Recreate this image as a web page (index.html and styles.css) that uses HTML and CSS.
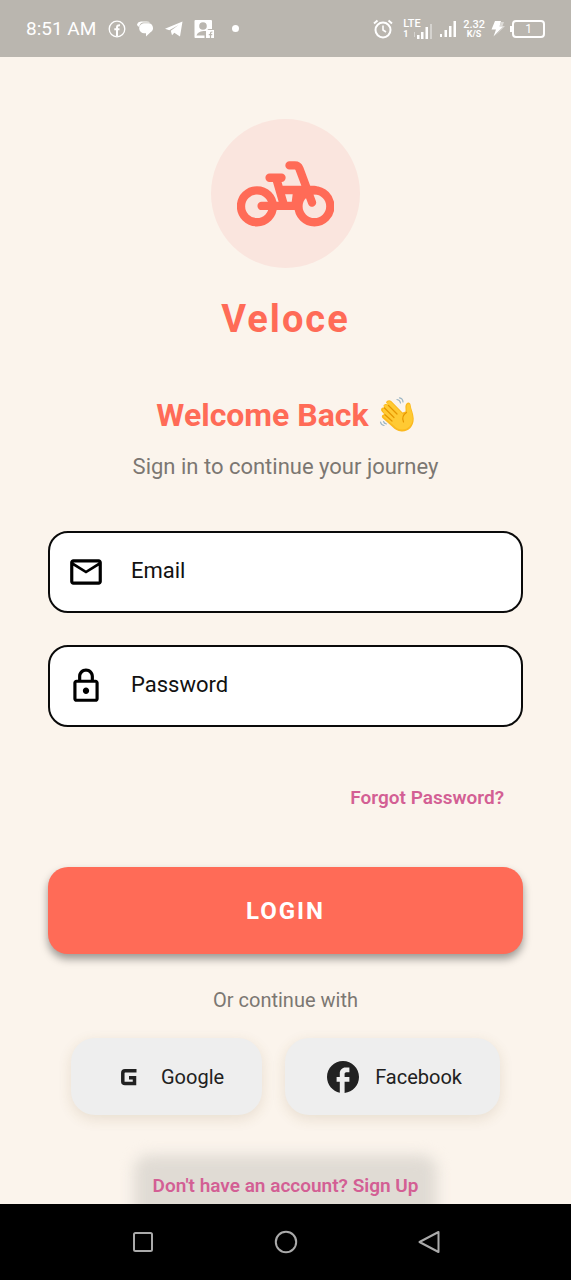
FILE: index.html
```html
<!DOCTYPE html>
<html lang="en">
<head>
<meta charset="utf-8">
<meta name="viewport" content="width=device-width, initial-scale=1">
<title>Veloce – Sign in</title>
<link rel="stylesheet" href="styles.css">
</head>
<body>
<div class="app">
  <header class="status">
    <div class="status-left">
      <span class="clock">8:51 AM</span>
      <svg width="18" height="18" viewBox="0 0 18 18" fill="none" stroke="currentColor"><circle cx="9" cy="9" r="7.8" stroke-width="1.3"/><path d="M9 16V7.2Q9 5 12 5.2M6.3 9.3h5.2" stroke-width="2"/></svg>
      <svg width="18" height="18" viewBox="0 0 18 18" fill="currentColor"><path d="M1 4.2Q2 1.500 5 1.500h5.500Q13 1.500 14 2.500H7Q3.500 3 3.400 7 1 6.500 1 4.200Z"/><path d="M7.800 3.200h4.700a4.800 4.800 0 0 1 2 9l-4.500 4.300v-3.300H8.500a5 5 0 0 1-.7-10Z"/></svg>
      <svg width="20" height="18" viewBox="0 0 20 18" fill="currentColor"><path d="M1 8.800 18.500 1.500 16 16.500 10.300 12.700 8 15.200 6.800 10.700 14.500 5 5.300 10.300Z"/></svg>
      <svg width="20" height="20" viewBox="0 0 20 20"><path fill="currentColor" fill-rule="evenodd" d="M1.500 1h15.500a1 1 0 0 1 1 1v8h-3.500l-2.500 2-2.500 0q-6 .5-7 4.500h8V19H1a1 1 0 0 1-.5-1V2a1 1 0 0 1 1-1ZM9 3.200a3.800 3.800 0 1 0 0 7.600 3.800 3.800 0 0 0 0-7.600Z"/><path fill="currentColor" d="M12 11h8v8h-8z"/><path d="M16.500 19v-4.500q0-1.600 2-1.500M14.800 15.600h3.500" fill="none" stroke="#bab6af" stroke-width="1.2"/></svg>
      <span class="dot"></span>
    </div>
    <div class="status-right">
      <svg width="20" height="20" viewBox="0 0 20 20" fill="none" stroke="currentColor" stroke-width="2"><circle cx="10" cy="11" r="7.500"/><path d="M10 6.500V11l3 2" stroke-width="1.600"/><path d="M1 4.500 4.500 1.500M19 4.500 15.500 1.500"/></svg>
      <div class="lte">
        <span class="lte-name">LTE</span>
        <span class="lte-row"><span>1</span><svg width="19" height="15" viewBox="0 0 19 15" fill="currentColor"><path d="M3 11h2.500v4H3zM7 8h2.500v7H7zM11.500 3H14v12h-2.500z"/><path opacity=".4" d="M16 0h2v15h-2zM0 8h1v5H0z"/></svg></span>
      </div>
      <svg width="18" height="18" viewBox="0 0 18 18" fill="currentColor"><path d="M1 14h2v3H1zM5.500 10H8v7H5.500zM10 6h2.500v11H10zM14.500 1H17v16h-2.500z"/></svg>
      <div class="speed"><span class="speed-num">2.32</span><span class="speed-unit">K/S</span></div>
      <svg width="14" height="18" viewBox="0 0 14 18"><path fill="currentColor" d="M4 1h6L8.500 6.500H12L2.500 16.500 5 9.500H.5Z"/><path fill="currentColor" opacity=".5" d="M10 2h3l-1.500 4H14L5 15l7-8.500H8.500Z"/></svg>
      <div class="battery">1</div>
    </div>
  </header>

  <main class="screen">
    <div class="logo">
      <svg class="bike" viewBox="110 151 292 198" fill="none" stroke="currentColor" stroke-width="25" stroke-linecap="round" stroke-linejoin="round" aria-hidden="true">
        <circle cx="170" cy="287" r="48"/><circle cx="343" cy="287" r="48"/>
        <path d="M184 286H292M208 201H244M228 203 250 279M242 238H343M268 164H284Q294 164 298 174L336 276M290 252 286 284"/>
      </svg>
    </div>
    <h1 class="brand">Veloce</h1>
    <h2 class="welcome">Welcome Back
      <svg class="wave" viewBox="0 0 36 36" role="img" aria-label="waving hand">
        <path fill="#fbb91f" d="M4.500 8.500C5.500 6.500 8 6.500 9.500 8.300L7 5.500C8 3 10.500 2.300 12.500 4.300L23.500 15.500 26.500 14.500C27 12 25.500 9 27.500 6.500 29.500 4.500 31.500 6 31.700 8.500 32 12 34.500 16 34.700 21.500 35 29.500 29 35 22.500 34.500 18.500 34.300 16 32.500 13.500 30L4 21.500C1.800 19.500 3.200 17 5.500 17.500L2.800 14.500C1.200 12.500 2.500 10 5 10.500Z"/>
        <path fill="#ffca33" d="M5 8.500c1.500-1.500 3-.5 4.500 1L7.800 6.500c.7-2.500 3-2.800 4.700-1l11.500 12 4-2c0-3-1-6 .3-8 1.200-1.300 2.700-.3 2.900 1.500.5 4 2.500 8 2.500 12.500 0 6-4.500 11-10.500 11-3.500 0-6-1.500-8.500-4L5 20c-1-1.500 0-2.500 2-1L4 14c-.5-2 .5-3 2.500-1.500Z"/>
        <path fill="none" stroke="#e59600" stroke-width="1.200" stroke-linecap="round" d="M9.500 8.500 18 17M5.500 11 15 20.500M6 17.700 13 24M27.500 15.500Q22 19 24.500 25"/>
        <path fill="none" stroke="#9bb5c4" stroke-width="1.200" stroke-linecap="round" d="M18 2.500Q21 3 21.500 6M20.500.800Q23.800 1.300 24 5M1.500 25Q2 28 5 28.500M4.500 24.500Q5 26.500 7.500 27"/>
      </svg>
    </h2>
    <p class="lead">Sign in to continue your journey</p>

    <form class="form">
      <label class="field">
        <svg class="field-icon" viewBox="0 0 24 24" fill="currentColor" aria-hidden="true"><path d="M22 6c0-1.100-.900-2-2-2H4c-1.100 0-2 .900-2 2v12c0 1.100.900 2 2 2h16c1.100 0 2-.900 2-2V6zm-2 0-8 5-8-5h16zm0 12H4V8l8 5 8-5v10z"/></svg>
        <input class="input" type="email" placeholder="Email" aria-label="Email">
      </label>
      <label class="field">
        <svg class="field-icon" viewBox="0 0 24 24" fill="currentColor" aria-hidden="true"><path d="M18 8h-1V6c0-2.760-2.240-5-5-5S7 3.240 7 6v2H6c-1.100 0-2 .900-2 2v10c0 1.100.900 2 2 2h12c1.100 0 2-.900 2-2V10c0-1.100-.900-2-2-2zM9 6c0-1.660 1.340-3 3-3s3 1.340 3 3v2H9V6zm9 14H6V10h12v10zm-6-3c1.100 0 2-.900 2-2s-.900-2-2-2-2 .900-2 2 .900 2 2 2z"/></svg>
        <input class="input" type="password" placeholder="Password" aria-label="Password">
      </label>
      <button class="text-button forgot" type="button">Forgot Password?</button>
      <button class="login" type="submit">LOGIN</button>
    </form>

    <p class="divider">Or continue with</p>
    <div class="social">
      <button class="social-button" type="button">
        <svg class="social-icon" viewBox="0 0 32 32" fill="none" stroke="currentColor" stroke-width="3.500" aria-hidden="true"><path d="M23.500 9.800H12Q9.800 9.800 9.800 12V20.500Q9.800 22.500 12 22.500H21.500V16.800H16"/></svg>
        <span>Google</span>
      </button>
      <button class="social-button" type="button">
        <svg class="social-icon" viewBox="2 2 20 20" fill="currentColor" aria-hidden="true"><path d="M22 12c0-5.520-4.480-10-10-10S2 6.480 2 12c0 4.840 3.440 8.870 8 9.800V15H8v-3h2V9.500C10 7.570 11.570 6 13.500 6H16v3h-2c-.550 0-1 .450-1 1v2h3v3h-3v6.950c5.050-.500 9-4.760 9-9.950z"/></svg>
        <span>Facebook</span>
      </button>
    </div>
    <button class="text-button signup" type="button">Don't have an account? Sign Up</button>
  </main>

  <nav class="system-nav" aria-label="System">
    <button class="nav-button" type="button" aria-label="Recents"><svg width="24" height="24" viewBox="0 0 24 24"><rect x="3" y="3" width="18" height="18" rx="1.500"/></svg></button>
    <button class="nav-button" type="button" aria-label="Home"><svg width="24" height="24" viewBox="0 0 24 24"><circle cx="12" cy="12" r="10.200"/></svg></button>
    <button class="nav-button" type="button" aria-label="Back"><svg width="24" height="24" viewBox="0 0 24 24"><path d="M21.500 2V22L2.500 12Z"/></svg></button>
  </nav>
</div>
</body>
</html>
```
FILE: styles.css
```css
* { box-sizing: border-box; }

body {
  margin: 0;
  background: #fbf4ec;
  font-family: Roboto, "Noto Sans", sans-serif;
}

h1, h2, p { margin: 0; }

svg { display: block; flex: none; }

button {
  font: inherit;
  border: 0;
  background: none;
  cursor: pointer;
}

.app {
  height: 100vh;
  display: flex;
  flex-direction: column;
}

/* System status bar */
.status {
  flex: none;
  height: 57px;
  padding: 0 26px;
  display: flex;
  align-items: center;
  justify-content: space-between;
  background: #bab6af;
  color: #fff;
}

.status-left, .status-right { display: flex; align-items: center; }
.status-left { gap: 10px; }
.status-right { gap: 6px; }
.clock { font-size: 19px; margin-right: 2px; white-space: nowrap; }
.dot { width: 7px; height: 7px; margin-left: 8px; border-radius: 50%; background: #fff; }

.lte { width: 30px; margin-left: 4px; }
.lte-name { display: block; height: 7px; font-size: 11px; line-height: 9px; font-weight: 500; }
.lte-row { display: flex; align-items: flex-end; justify-content: space-between; height: 13px; font-size: 9px; line-height: 9px; font-weight: 700; }

.speed { display: flex; flex-direction: column; align-items: center; font-weight: 500; }
.speed-num { font-size: 11px; line-height: 10px; }
.speed-unit { font-size: 9px; line-height: 8px; font-weight: 700; }

.battery {
  position: relative;
  width: 33px;
  height: 18px;
  margin-left: 1px;
  border: 2px solid #fff;
  border-radius: 4px;
  font-size: 12px;
  line-height: 14px;
  text-align: center;
}
.battery::before {
  content: "";
  position: absolute;
  left: -4px;
  top: 4px;
  width: 2px;
  height: 6px;
  background: #fff;
}

/* Sign-in screen */
.screen {
  flex: 1;
  min-height: 0;
  overflow-y: auto;
  scrollbar-width: none;
  padding: 62px 48px 0;
  display: flex;
  flex-direction: column;
  align-items: center;
}
.screen > * { flex: none; }

.logo {
  width: 149px;
  height: 149px;
  border-radius: 50%;
  background: #fae5de;
  color: #ff6b57;
  display: grid;
  place-items: center;
}
.bike { width: 97px; height: 66px; }

.brand {
  margin-top: 29px;
  font-size: 38px;
  line-height: 44px;
  font-weight: 700;
  letter-spacing: 2px;
  color: #ff6b57;
}

.welcome {
  margin-top: 54px;
  display: flex;
  align-items: center;
  gap: 10px;
  font-size: 32px;
  line-height: 40px;
  font-weight: 700;
  color: #ff6b57;
}
.wave { width: 36px; height: 36px; }

.lead {
  margin-top: 20px;
  font-size: 22px;
  line-height: 24px;
  color: #7b7772;
}

.form {
  width: 100%;
  margin-top: 52px;
  display: flex;
  flex-direction: column;
}

.field {
  height: 82px;
  margin-bottom: 32px;
  padding: 0 17px;
  display: flex;
  align-items: center;
  gap: 26px;
  background: #fff;
  border: 2px solid #0a0a0a;
  border-radius: 20px;
  color: #000;
}
.field-icon { width: 38px; height: 38px; }

.input {
  flex: 1;
  min-width: 0;
  padding: 0 0 4px;
  border: 0;
  outline: 0;
  background: none;
  font: inherit;
  font-size: 22px;
  color: #111;
}
.input::placeholder { color: #111; opacity: 1; }

.text-button {
  height: 40px;
  padding: 0 19px;
  font-size: 19px;
  font-weight: 600;
  color: #d35f94;
}
.forgot { align-self: flex-end; margin-top: 18px; }

.login {
  height: 87px;
  margin-top: 50px;
  border-radius: 20px;
  background: #ff6b57;
  box-shadow: 0 5px 8px rgba(0, 0, 0, 0.38);
  color: #fff;
  font-size: 24px;
  font-weight: 700;
  letter-spacing: 2px;
}

.divider {
  margin-top: 34px;
  font-size: 20px;
  line-height: 24px;
  color: #7b7772;
}

.social { display: flex; gap: 23px; margin-top: 26px; }
.social-button {
  height: 77px;
  padding: 0 38px 0 42px;
  display: flex;
  align-items: center;
  gap: 16px;
  border-radius: 24px;
  background: #eee;
  box-shadow: 0 4px 14px rgba(120, 90, 40, 0.14);
  color: #212121;
  font-size: 20px;
}
.social-icon { width: 32px; height: 32px; }

.signup {
  position: relative;
  z-index: 0;
  height: 60px;
  margin-top: 40px;
}
.signup::before {
  content: "";
  position: absolute;
  z-index: -1;
  inset: 0 0 -30px;
  border-radius: 16px;
  background: #e0dbd4;
  filter: blur(7px);
}

/* System navigation bar */
.system-nav {
  position: relative;
  z-index: 1;
  flex: none;
  height: 76px;
  padding: 0 71px;
  display: grid;
  grid-template-columns: repeat(3, 1fr);
  background: #000;
}
.nav-button { display: grid; place-items: center; padding: 0; }
.nav-button svg { fill: none; stroke: #aaa; stroke-width: 2; stroke-linejoin: round; }
```
